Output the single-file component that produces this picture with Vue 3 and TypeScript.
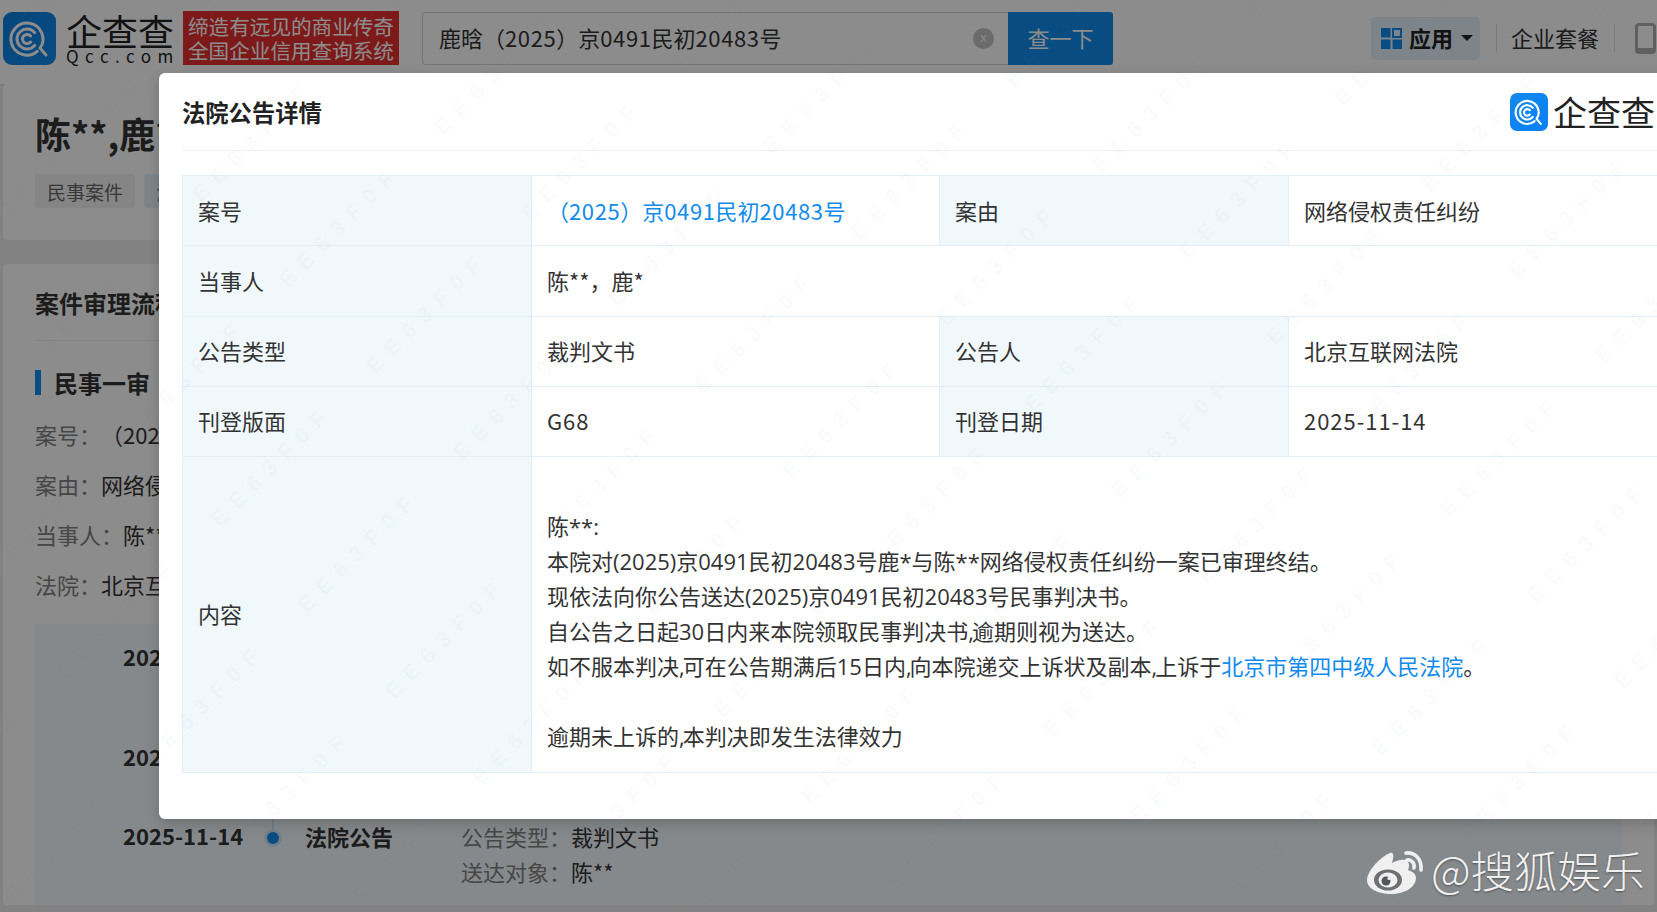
<script setup lang="ts">
// faint diagonal watermark: a sheared lattice across the whole viewport
const marks: { x: number; y: number }[] = [];
for (let i = -12; i < 14; i++) {
  for (let j = -8; j < 10; j++) {
    const x = 1028 + i * 87 + j * 155;
    const y = 397 + i * 86 - j * 153;
    if (x > -200 && x < 1700 && y > -40 && y < 1100) marks.push({ x, y });
  }
}

const caseInfo = [
  ['案号：', '（2025）京0491民初20483号'],
  ['案由：', '网络侵权责任纠纷'],
  ['当事人：', '陈**，鹿*'],
  ['法院：', '北京互联网法院'],
];
</script>

<template>
  <div class="screen">
    <svg class="defs" width="0" height="0">
      <symbol id="qcc" viewBox="0 0 53 53">
        <g fill="none" stroke="#fff" stroke-width="3" stroke-linecap="round">
          <path d="M34.3 39.3A16 16 0 1 1 37.1 36.2L43 43" />
          <path d="M31.7 33.4A10 10 0 1 1 31.7 20.6" />
          <path d="M27.6 30A4.6 4.6 0 1 1 27.6 24" />
        </g>
      </symbol>
    </svg>

    <header class="nav">
      <div class="logo-mark"><svg width="53" height="53"><use href="#qcc" /></svg></div>
      <div class="logo-word">
        <span class="logo-cn">企查查</span>
        <span class="logo-en">Qcc.com</span>
      </div>
      <div class="banner">
        <span>缔造有远见的商业传奇</span>
        <span>全国企业信用查询系统</span>
      </div>
      <div class="search">
        <div class="search-input">
          <span>鹿晗（<span class="num">2025</span>）京<span class="num">0491</span>民初<span class="num">20483</span>号</span>
          <i class="clear">x</i>
        </div>
        <button class="search-btn">查一下</button>
      </div>
      <div class="apps">
        <svg width="21" height="21" viewBox="0 0 21 21">
          <rect width="9.5" height="9.5" fill="#128bed" />
          <rect x="12" y="1" width="8" height="8" fill="none" stroke="#128bed" stroke-width="2" />
          <rect y="11.5" width="9.5" height="9.5" fill="#128bed" />
          <rect x="11.5" y="11.5" width="9.5" height="9.5" fill="#128bed" />
        </svg>
        <b>应用</b>
        <i class="caret"></i>
      </div>
      <span class="sep"></span>
      <span class="nav-link">企业套餐</span>
      <span class="sep"></span>
      <i class="phone"></i>
    </header>

    <main class="page">
      <section class="card head-card">
        <h1>陈**,鹿*</h1>
        <div class="tags">
          <span class="tag">民事案件</span>
          <span class="tag tag-blue">法院公告</span>
        </div>
      </section>
      <section class="card flow-card">
        <h2>案件审理流程</h2>
        <h3>民事一审</h3>
        <p v-for="row in caseInfo" :key="row[0]" class="info-row">
          <span class="muted">{{ row[0] }}</span>{{ row[1] }}
        </p>
        <div class="timeline">
          <div class="tl-row r1">
            <b>2025-06-12</b><span></span><b class="tl-title">立案</b><span></span>
          </div>
          <div class="tl-row r2">
            <b>2025-09-03</b><span></span><b class="tl-title">开庭</b><span></span>
          </div>
          <div class="tl-row">
            <b>2025-11-14</b>
            <span class="dot-cell"><i class="dot"></i></span>
            <b class="tl-title">法院公告</b>
            <div class="tl-info">
              <p><span class="muted">公告类型：</span>裁判文书</p>
              <p><span class="muted">送达对象：</span>陈**</p>
            </div>
          </div>
        </div>
      </section>
    </main>

    <div class="mask"></div>

    <div class="modal">
      <div class="modal-head">
        <strong>法院公告详情</strong>
        <div class="modal-logo">
          <div class="modal-mark"><svg width="38" height="38"><use href="#qcc" /></svg></div>
          <span>企查查</span>
        </div>
      </div>
      <table class="detail">
        <colgroup>
          <col style="width: 349px" />
          <col style="width: 408px" />
          <col style="width: 349px" />
          <col />
        </colgroup>
        <tbody>
          <tr>
            <th>案号</th>
            <td>
              <a>（<span class="num">2025</span>）京<span class="num">0491</span>民初<span class="num">20483</span>号</a>
            </td>
            <th>案由</th>
            <td>网络侵权责任纠纷</td>
          </tr>
          <tr>
            <th>当事人</th>
            <td colspan="3">陈**，鹿*</td>
          </tr>
          <tr>
            <th>公告类型</th>
            <td>裁判文书</td>
            <th>公告人</th>
            <td>北京互联网法院</td>
          </tr>
          <tr class="short-row">
            <th>刊登版面</th>
            <td><span class="date">G68</span></td>
            <th>刊登日期</th>
            <td><span class="date">2025-11-14</span></td>
          </tr>
          <tr class="content-row">
            <th>内容</th>
            <td colspan="3">
              <br />陈**:<br />
              本院对(2025)京0491民初20483号鹿*与陈**网络侵权责任纠纷一案已审理终结。<br />
              现依法向你公告送达(2025)京0491民初20483号民事判决书。<br />
              自公告之日起30日内来本院领取民事判决书<span class="cm">,</span>逾期则视为送达。<br />
              如不服本判决<span class="cm">,</span>可在公告期满后15日内<span class="cm">,</span>向本院递交上诉状及副本<span class="cm">,</span>上诉于<a>北京市第四中级人民法院</a>。<br />
              <br />
              逾期未上诉的<span class="cm">,</span>本判决即发生法律效力
            </td>
          </tr>
        </tbody>
      </table>
    </div>

    <div class="marks">
      <span v-for="(m, i) in marks" :key="i" class="mark" :style="{ left: m.x + 'px', top: m.y + 'px' }">EE63F0F</span>
    </div>

    <div class="weibo">
      <svg width="58" height="50" viewBox="0 0 58 50">
        <path
          fill="#f0f0f0"
          d="M23 8C15 11 1 24 0 35C0 44 12 49 24 49C38 49 49 42 49 33C49 28 44 26 41 25C43 20 42 16 38 15C34 14 29 16 25 18C27 12 27 7 23 8Z"
        />
        <ellipse cx="21" cy="35" rx="14" ry="10.5" fill="#6e6f72" />
        <ellipse cx="21" cy="35" rx="9.5" ry="7.5" fill="#f0f0f0" />
        <circle cx="19" cy="36" r="4.5" fill="#55565a" />
        <circle cx="22" cy="33.5" r="1.6" fill="#f0f0f0" />
        <g fill="none" stroke="#f0f0f0" stroke-width="3.6" stroke-linecap="round">
          <path d="M39 8C48 7 55 14 54 25" />
          <path d="M40 15C44 14 48 18 47 23" />
        </g>
      </svg>
      <span>@搜狐娱乐</span>
    </div>
  </div>
</template>

<style scoped>
.screen {
  position: relative;
  width: 1657px;
  height: 912px;
  overflow: hidden;
  background: #ededed;
  color: #333;
  font-family: "Noto Sans CJK SC", "Liberation Sans", sans-serif;
  font-size: 22px;
  text-spacing-trim: space-all;
}
.defs {
  position: absolute;
}
.num {
  letter-spacing: 0.6px;
}
.date {
  letter-spacing: 0.95px;
}
.cm {
  letter-spacing: -2px;
}

/* top bar */
.nav {
  display: flex;
  align-items: center;
  height: 84px;
  padding-left: 3px;
  padding-bottom: 8px;
  box-sizing: border-box;
  background: #fff;
  box-shadow: 0 1px 4px rgba(0, 0, 0, 0.12);
}
.logo-mark {
  width: 53px;
  height: 53px;
  border-radius: 9px;
  background: linear-gradient(135deg, #0a7fe0, #128bed);
}
.logo-word {
  display: flex;
  flex-direction: column;
  width: 117px;
  height: 53px;
  margin-left: 10px;
  color: #222;
  line-height: 1;
}
.logo-cn {
  font-size: 36px;
  height: 34px;
  white-space: nowrap;
}
.logo-en {
  font-size: 17px;
  letter-spacing: 6.5px;
  margin-top: 1px;
  white-space: nowrap;
}
.banner {
  display: flex;
  flex-direction: column;
  justify-content: center;
  width: 216px;
  height: 54px;
  background: #e32f2f;
  color: #fff;
  font-size: 20.6px;
  line-height: 24px;
  text-align: center;
  white-space: nowrap;
}
.search {
  display: flex;
  width: 691px;
  height: 53px;
  margin-left: 23px;
}
.search-input {
  flex: 1;
  display: flex;
  align-items: center;
  justify-content: space-between;
  padding: 0 14px 2px 16px;
  border: 1px solid #d6d6d6;
  border-right: 0;
  border-radius: 4px 0 0 4px;
}
.clear {
  width: 21px;
  height: 21px;
  margin-top: 2px;
  border-radius: 50%;
  background: #c4c4c4;
  color: #fff;
  font: 13px/20px "Liberation Sans", sans-serif;
  text-align: center;
}
.search-btn {
  width: 105px;
  padding: 0 0 2px;
  border: 0;
  border-radius: 0 3px 3px 0;
  background: #128bed;
  color: #fff;
  font: inherit;
}
.apps {
  display: flex;
  align-items: center;
  gap: 7px;
  width: 109px;
  height: 43px;
  margin-left: 258px;
  padding-left: 10px;
  box-sizing: border-box;
  border-radius: 5px;
  background: #e6f2fc;
}
.apps b {
  color: #222;
  margin-top: -2px;
}
.caret {
  margin-left: 1px;
  border: 6px solid transparent;
  border-top: 6px solid #222;
  border-bottom: 0;
}
.sep {
  width: 1px;
  height: 28px;
  margin-left: 16px;
  background: #e0e0e0;
}
.nav-link {
  margin-left: 14px;
  margin-top: -2px;
  white-space: nowrap;
}
.nav-link + .sep {
  margin-left: 15px;
}
.phone {
  flex: none;
  width: 21px;
  height: 31px;
  margin-left: 20px;
  box-sizing: border-box;
  border: 3px solid #b0b0b0;
  border-bottom-width: 6px;
  border-radius: 4px;
}

/* page underneath the mask */
.page {
  padding: 0 3px;
}
.card {
  background: #fff;
  border-radius: 4px;
  padding: 0 32px;
}
.head-card {
  height: 156px;
  box-sizing: border-box;
  padding-top: 24px;
}
h1 {
  margin: 0;
  font-size: 36px;
  line-height: 50px;
  white-space: nowrap;
}
.tags {
  display: flex;
  gap: 9px;
  margin-top: 16px;
}
.tag {
  width: 100px;
  height: 34px;
  border-radius: 3px;
  background: #f3f3f3;
  color: #666;
  font-size: 19px;
  line-height: 35px;
  text-align: center;
}
.tag-blue {
  background: #e6f2fc;
  color: #128bed;
}
.flow-card {
  margin-top: 24px;
  height: 641px;
}
h2 {
  margin: 0;
  height: 77px;
  box-sizing: border-box;
  padding-top: 20px;
  border-bottom: 1px solid #eee;
  font-size: 24px;
  line-height: 38px;
}
h3 {
  margin: 29px 0 14px;
  padding-left: 13px;
  height: 25px;
  border-left: 6px solid #128bed;
  box-sizing: border-box;
  font-size: 24px;
  line-height: 25px;
  white-space: nowrap;
}
.info-row {
  margin: 0;
  line-height: 50px;
  white-space: nowrap;
}
.muted {
  color: #808080;
}
.timeline {
  margin-top: 15px;
  height: 281px;
  box-sizing: border-box;
  padding: 14px 0 0 88px;
  background: #f5f9fd;
}
.tl-row {
  display: grid;
  grid-template-columns: 133px 49px 156px 1fr;
  line-height: 36px;
}
.r1 {
  height: 100px;
}
.r2 {
  height: 79px;
}
.dot-cell {
  position: relative;
  display: flex;
  align-items: center;
  height: 42px;
  padding-left: 11px;
}
.dot {
  width: 12px;
  height: 12px;
  border-radius: 50%;
  background: #128bed;
  box-shadow: 0 0 0 3px #cfe6fa;
}
.dot::before {
  content: "";
  position: absolute;
  left: 16px;
  bottom: 30px;
  width: 2px;
  height: 30px;
  background: #cfe6fa;
}
.tl-title {
  padding-top: 1px;
  white-space: nowrap;
}
.tl-info {
  padding-top: 2px;
}
.tl-info p {
  margin: 0;
  line-height: 34.5px;
}

.mask {
  position: absolute;
  inset: 0;
  background: rgba(0, 0, 0, 0.45);
}

/* dialog */
.modal {
  position: absolute;
  left: 159px;
  top: 73px;
  width: 1540px;
  height: 746px;
  box-sizing: border-box;
  padding: 0 23px;
  border-radius: 6px;
  background: #fff;
  box-shadow: 0 5px 14px rgba(0, 0, 0, 0.18);
}
.modal-head {
  display: flex;
  align-items: center;
  justify-content: space-between;
  height: 78px;
  padding-right: 23px;
  border-bottom: 1px solid #eee;
  box-sizing: border-box;
}
.modal-head strong {
  font-size: 23.3px;
  color: #222;
}
.modal-logo {
  display: flex;
  align-items: center;
  gap: 5px;
  margin-right: -2px;
  font-size: 34px;
  color: #222;
  line-height: 38px;
}
.modal-mark {
  width: 38px;
  height: 38px;
  border-radius: 7px;
  background: linear-gradient(135deg, #128bed, #0a7ff5);
}
.detail {
  width: 100%;
  margin-top: 24px;
  table-layout: fixed;
  border-collapse: collapse;
}
.detail th,
.detail td {
  height: 70px;
  padding: 0 15px 2px;
  border: 1px solid #e4eef6;
  font-weight: 400;
  text-align: left;
  box-sizing: border-box;
}
.detail tr:nth-child(2) th,
.detail tr:nth-child(2) td {
  height: 70.5px;
}
.detail th {
  background: #f0f8fc;
}
.detail .content-row th,
.detail .content-row td {
  height: 316px;
  line-height: 35px;
  padding-top: 0;
  padding-bottom: 1px;
}
.detail .content-row th {
  padding-bottom: 2px;
}
.detail .content-row td {
  font-family: "Open Sans", "Noto Sans CJK SC", sans-serif;
}
.detail a {
  color: #128bed;
}

.marks {
  position: absolute;
  inset: 0;
  overflow: hidden;
  pointer-events: none;
}
.mark {
  position: absolute;
  transform: rotate(-45deg);
  transform-origin: left center;
  color: rgba(110, 135, 165, 0.04);
  font: 700 22px/1 "Liberation Sans", sans-serif;
  letter-spacing: 10px;
  white-space: nowrap;
}

.weibo {
  position: absolute;
  left: 1367px;
  top: 845px;
  display: flex;
  align-items: center;
  gap: 6px;
  color: #f0f0f0;
  font-size: 43.5px;
  font-weight: 300;
  line-height: 50px;
  white-space: nowrap;
  text-shadow: 0 1px 2px rgba(0, 0, 0, 0.4);
}
</style>

<style>
html,
body {
  margin: 0;
  overflow: hidden;
}
</style>
